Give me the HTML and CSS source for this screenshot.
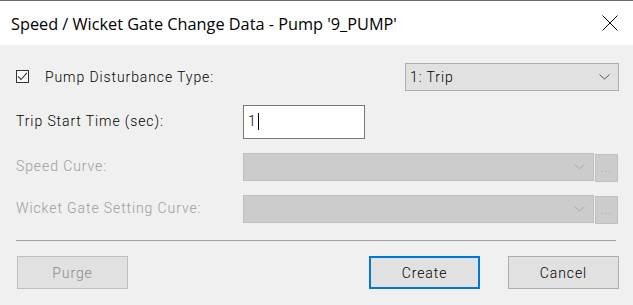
FILE: index.html
```html
<!DOCTYPE html>
<html lang="en">
<head>
    <meta charset="UTF-8">
    <title>Speed / Wicket Gate Change Data</title>
    <link rel="stylesheet" href="styles.css">
</head>
<body>
    <div class="dialog">
        <div class="title-bar">
            <div class="title">Speed / Wicket Gate Change Data - Pump '9_PUMP'</div>
            <svg class="close" width="16" height="16" viewBox="0 0 16 16">
                <path d="M0.5 0.5 L15.5 15.5 M15.5 0.5 L0.5 15.5" stroke="#000" stroke-width="1" fill="none"/>
            </svg>
        </div>

        <div class="content">
            <!-- tipo de perturbacion -->
            <div class="row row-first">
                <span class="checkbox">
                    <svg width="11" height="11" viewBox="0 0 11 11">
                        <path d="M1 5.3 L4 8.5 L10 1.8" stroke="#333" stroke-width="1.1" fill="none"/>
                    </svg>
                </span>
                <span class="label check-label">Pump Disturbance Type:</span>
                <div class="select select-type">
                    <span class="select-text">1: Trip</span>
                    <svg class="chevron" width="11" height="6" viewBox="0 0 11 6">
                        <path d="M0.5 0.5 L5.5 5 L10.5 0.5" stroke="#555" stroke-width="1" fill="none"/>
                    </svg>
                </div>
            </div>

            <div class="row">
                <span class="label label-col">Trip Start Time (sec):</span>
                <div class="textbox"><span>1</span><span class="caret"></span></div>
            </div>

            <div class="row row-curve">
                <span class="label label-col disabled">Speed Curve:</span>
                <div class="select select-curve disabled-box">
                    <svg class="chevron" width="11" height="6" viewBox="0 0 11 6">
                        <path d="M0.5 0.5 L5.5 5 L10.5 0.5" stroke="#a8a8a8" stroke-width="1" fill="none"/>
                    </svg>
                </div>
                <div class="ellipsis disabled-box">...</div>
            </div>

            <div class="row row-curve">
                <span class="label label-col disabled">Wicket Gate Setting Curve:</span>
                <div class="select select-curve disabled-box">
                    <svg class="chevron" width="11" height="6" viewBox="0 0 11 6">
                        <path d="M0.5 0.5 L5.5 5 L10.5 0.5" stroke="#a8a8a8" stroke-width="1" fill="none"/>
                    </svg>
                </div>
                <div class="ellipsis disabled-box">...</div>
            </div>

            <div class="separator"></div>

            <div class="buttons">
                <div class="button disabled-box purge">Purge</div>
                <div class="button default">Create</div>
                <div class="button">Cancel</div>
            </div>
        </div>
    </div>
</body>
</html>
```

FILE: styles.css
```css
* {
    margin: 0;
    padding: 0;
    box-sizing: border-box;
}

body, html {
    width: 633px;
    height: 305px;
    background: #f0f0f0;
    overflow: hidden;
}

.dialog {
    border-top: 1px solid #6e6e6e;
    height: 100%;
}

/* Barra de titulo */
.title-bar {
    height: 44px;
    background: #fff;
    display: flex;
    align-items: center;
    padding-left: 11px;
    padding-right: 15px;
}

.title {
    font-family: "Open Sans", "Noto Sans", sans-serif;
    font-size: 16.3px;
    color: #000;
    flex: 1;
    margin-top: 1px;
}

/* Contenido */
.content {
    padding: 18px 14px 0 16px;
    font-family: Roboto, "Liberation Sans", sans-serif;
    font-size: 14px;
    font-weight: 300;
    letter-spacing: 0.9px;
    color: #000;
}

.row {
    display: flex;
    align-items: center;
    margin-top: 14px;
}

.row-first {
    margin-top: 0;
    height: 28px;
}

.row-curve {
    height: 28px;
}

.checkbox {
    width: 13px;
    height: 13px;
    border: 1px solid #333;
    background: #fff;
    display: flex;
    align-items: center;
    justify-content: center;
    margin-top: -2px;
}

.check-label {
    margin-left: 16px;
}

.label-col {
    width: 227px;
    margin-top: -3px;
}

.disabled {
    color: #9c9c9c;
}

.select {
    height: 28px;
    display: flex;
    align-items: center;
    border: 1px solid #adadad;
    background: #e1e1e1;
    padding-left: 4px;
    padding-right: 8px;
}

.select-type {
    margin-left: auto;
    width: 214px;
}

.select-text {
    flex: 1;
}

.chevron {
    margin-left: auto;
}

.select-curve {
    width: 351px;
}

.disabled-box {
    background: #cccccc;
    border: 1px solid #bfbfbf;
}

.ellipsis {
    align-self: flex-start;
    width: 23px;
    height: 28px;
    margin-left: 1px;
    margin-top: 1px;
    color: #a0a0a0;
    font-size: 12px;
    letter-spacing: 1px;
    display: flex;
    align-items: flex-end;
    justify-content: center;
    padding-bottom: 6px;
}

.textbox {
    width: 122px;
    height: 34px;
    border: 1px solid #7a7a7a;
    background: #fff;
    display: flex;
    align-items: center;
    padding-left: 4px;
    padding-bottom: 2px;
}

.caret {
    width: 1px;
    height: 17px;
    background: #000;
    margin-left: 1px;
}

.separator {
    height: 1px;
    background: #a0a0a0;
    margin-top: 17px;
    margin-right: 3px;
}

/* Botones */
.buttons {
    display: flex;
    margin-top: 15px;
    padding-left: 1px;
}

.button {
    width: 111px;
    height: 33px;
    border: 1px solid #adadad;
    background: #e1e1e1;
    display: flex;
    align-items: center;
    justify-content: center;
    margin-left: 28px;
}

.purge {
    margin-left: 0;
    margin-right: auto;
    color: #8a8a8a;
    border-color: #bfbfbf;
}

.default {
    border: 2px solid #0078d7;
}
```
